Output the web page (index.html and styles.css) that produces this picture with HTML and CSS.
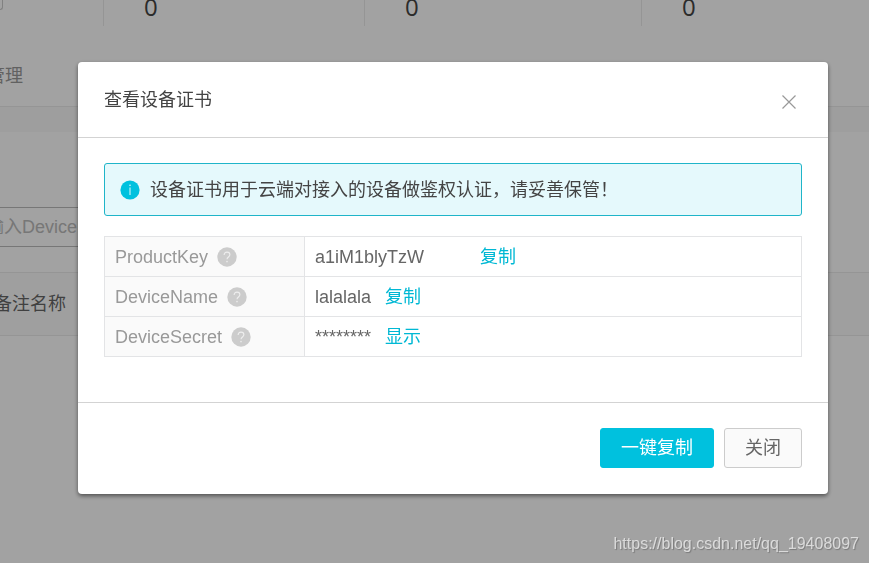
FILE: index.html
```html
<!DOCTYPE html>
<html lang="zh-CN">
<head>
<meta charset="utf-8">
<meta name="viewport" content="width=device-width, initial-scale=1">
<title>查看设备证书</title>
<link rel="stylesheet" href="styles.css">
</head>
<body>
<svg class="sprite" aria-hidden="true">
  <symbol id="help" viewBox="0 0 20 20">
    <circle cx="10" cy="10" r="9.7" fill="#ccc"/>
    <path d="M7.1 8.1C7.1 6.2 8.3 5.1 10 5.1s2.9 1.1 2.9 2.7c0 2.1-2.9 2.3-2.9 4.5" fill="none" stroke="#eee" stroke-width="1.1"/>
    <circle cx="10" cy="14.6" r=".8" fill="#eee"/>
  </symbol>
</svg>

<main class="page">
  <section class="stats">
    <div class="stat stat-first"><span class="chip"></span></div>
    <div class="stat">0</div>
    <div class="stat">0</div>
    <div class="stat">0</div>
  </section>
  <nav class="tabs"><a href="#" class="tab">管理</a></nav>
  <div class="band"></div>
  <div class="search">
    <input class="search-input" type="text" placeholder="输入DeviceName" aria-label="DeviceName">
  </div>
  <table class="list">
    <tr><th>备注名称</th></tr>
  </table>
</main>

<div class="overlay">
  <section class="dialog" role="dialog" aria-modal="true" aria-labelledby="title">
    <header class="dialog-head">
      <h1 class="dialog-title" id="title">查看设备证书</h1>
      <button class="close" type="button" aria-label="关闭">
        <svg width="16" height="16" viewBox="0 0 16 16"><path d="M1.5 1.5l13 13M14.5 1.5l-13 13" stroke="#999" stroke-width="1.2" fill="none"/></svg>
      </button>
    </header>
    <div class="dialog-body">
      <div class="notice">
        <svg width="20" height="20" viewBox="0 0 20 20"><circle cx="10" cy="10" r="9.6" fill="#00c1de"/><path d="M10 7.5v7.5" stroke="#e5f9fc" stroke-width="1"/><circle cx="10" cy="5.3" r=".8" fill="#e5f9fc"/></svg>
        <span>设备证书用于云端对接入的设备做鉴权认证，请妥善保管！</span>
      </div>
      <table class="cert">
        <tr>
          <th scope="row"><div class="cell">ProductKey<svg class="help"><use href="#help"/></svg></div></th>
          <td><div class="cell"><span class="value value-wide">a1iM1blyTzW</span><a href="#">复制</a></div></td>
        </tr>
        <tr>
          <th scope="row"><div class="cell">DeviceName<svg class="help"><use href="#help"/></svg></div></th>
          <td><div class="cell"><span class="value">lalalala</span><a href="#">复制</a></div></td>
        </tr>
        <tr>
          <th scope="row"><div class="cell">DeviceSecret<svg class="help"><use href="#help"/></svg></div></th>
          <td><div class="cell"><span class="value">********</span><a href="#">显示</a></div></td>
        </tr>
      </table>
    </div>
    <footer class="dialog-foot">
      <button class="btn btn-primary" type="button">一键复制</button>
      <button class="btn" type="button">关闭</button>
    </footer>
  </section>
</div>
<div class="watermark">https://blog.csdn.net/qq_19408097</div>
</body>
</html>
```
FILE: styles.css
```css
* { box-sizing: border-box; }

body {
  margin: 0;
  overflow: hidden;
  background: #fff;
  color: #444;
  font: 18px/24px "Liberation Sans", "Noto Sans CJK SC", sans-serif;
}

.sprite { position: absolute; width: 0; height: 0; }

a { color: #00b8d4; text-decoration: none; }

button, input { font: inherit; }

/* Page behind the dialog */
.page { min-height: 100vh; overflow: hidden; }

.stats {
  display: grid;
  grid-template-columns: 104px 261px 277px 1fr;
  height: 26px;
}

.stat {
  padding-left: 40px;
  border-right: 1px solid #ebebeb;
  color: #444;
  font: 24px/14px "Open Sans", sans-serif;
}

.stat:last-child { border-right: 0; }

.stat-first { padding-left: 0; }

.chip {
  display: block;
  width: 3px;
  height: 10px;
  border: solid #ccc;
  border-width: 0 1px 1px 0;
  border-radius: 0 0 3px;
}

.tabs {
  display: flex;
  height: 81px;
  padding-top: 38px;
  border-bottom: 1px solid #ebebeb;
}

.tab { margin-left: -13px; color: #999; }

.band { height: 25px; background: #f9f9f9; }

.search { padding: 75px 0 25px; }

.search-input {
  display: block;
  width: 400px;
  height: 40px;
  margin-left: -25px;
  padding: 0 10px;
  border: 1px solid #bbb;
  background: #fff;
}

.search-input::placeholder { color: #bbb; opacity: 1; }

.list { width: 100%; border-collapse: collapse; }

.list th {
  height: 63px;
  padding: 0;
  border: solid #ebebeb;
  border-width: 1px 0;
  background: #fbfbfb;
  color: #666;
  font-weight: 400;
  text-align: left;
  text-indent: -6px;
}

/* Dialog */
.overlay {
  position: fixed;
  inset: 0;
  padding: 62px 41px 0 78px;
  background: rgba(0, 0, 0, .365);
}

.dialog {
  border-radius: 4px;
  background: #fff;
  box-shadow: 0 2px 4px rgba(0, 0, 0, .5);
}

.dialog-head {
  display: flex;
  align-items: center;
  justify-content: space-between;
  height: 76px;
  padding: 0 26px;
  border-bottom: 1px solid #d3d3d3;
}

.dialog-title { margin: 0; font-size: 18px; font-weight: 400; }

.close {
  display: flex;
  padding: 9px 5px 5px;
  border: 0;
  background: none;
}

.dialog-body { padding: 25px 26px 45px; }

.notice {
  display: flex;
  align-items: center;
  gap: 10px;
  min-height: 53px;
  margin-bottom: 20px;
  padding: 0 15px;
  border: 1px solid #1fb5c9;
  border-radius: 3px;
  background: #e5f9fc;
}

.cert { width: 100%; border-collapse: collapse; }

.cert th, .cert td {
  height: 40px;
  padding: 0 10px;
  border: 1px solid #e3e4e6;
  font-weight: 400;
  text-align: left;
}

.cert th { width: 200px; background: #fafafa; color: #999; }

.cert td { color: #666; }

.cell { display: flex; align-items: center; }

.help { width: 20px; height: 20px; margin-left: 9px; }

.value { margin-right: 14px; }

.value-wide { min-width: 151px; }

.dialog-foot {
  display: flex;
  justify-content: flex-end;
  gap: 10px;
  padding: 25px 26px 26px;
  border-top: 1px solid #d3d3d3;
}

.btn {
  height: 40px;
  padding: 0 20px;
  border: 1px solid #ccc;
  border-radius: 3px;
  background: #fafafa;
  color: #666;
}

.btn-primary { border-color: #00c1de; background: #00c1de; color: #fff; }

.watermark {
  position: fixed;
  right: 10px;
  bottom: 7px;
  color: rgba(255, 255, 255, .65);
  font-size: 16px;
  text-shadow: 1px 1px 1px rgba(0, 0, 0, .25);
}
```
